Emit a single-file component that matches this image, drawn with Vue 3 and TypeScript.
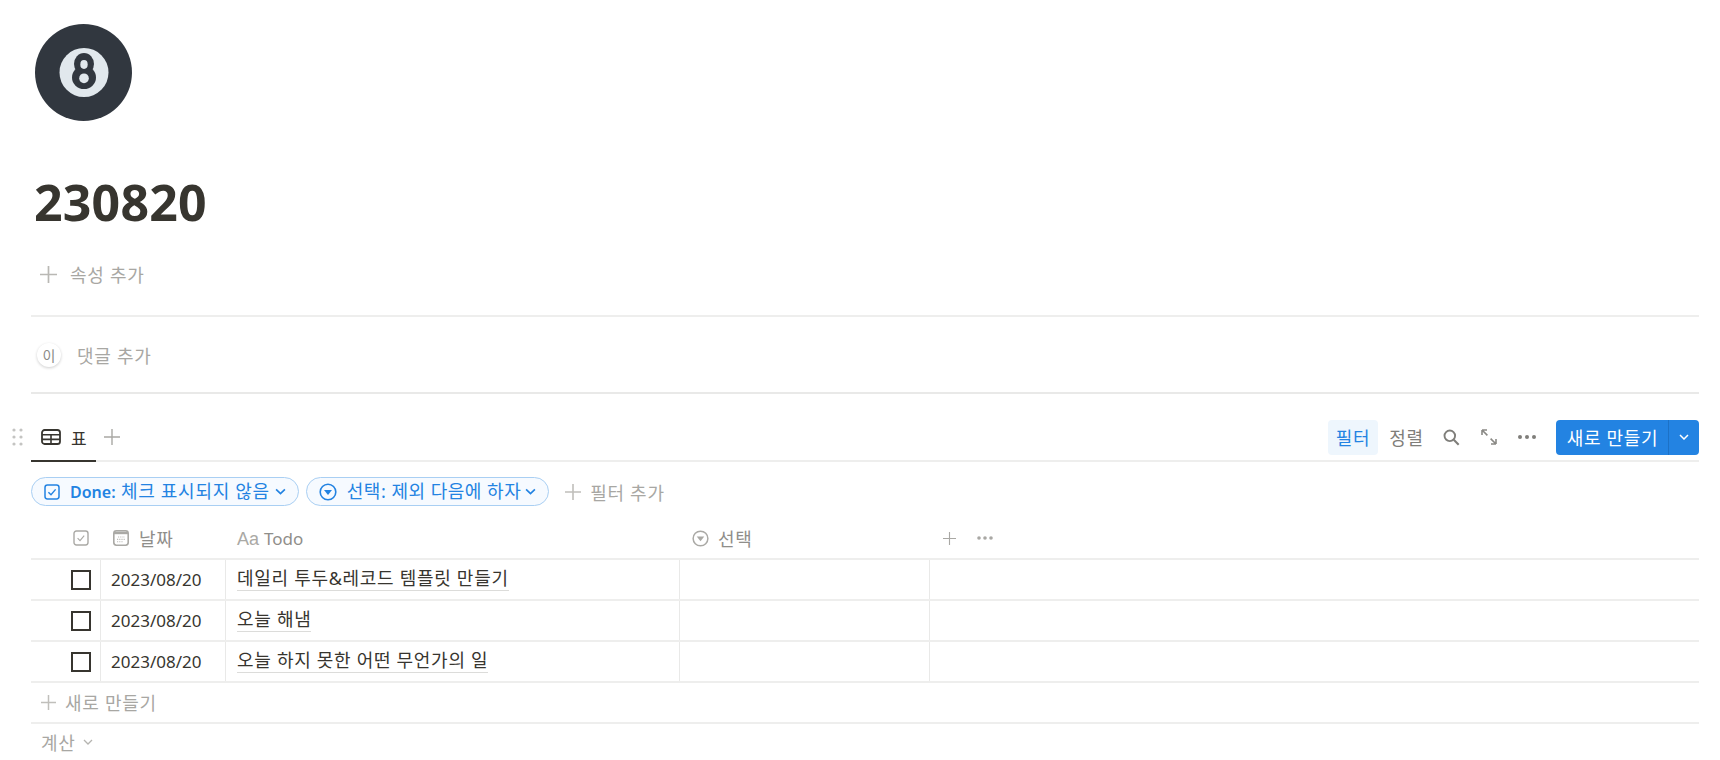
<script setup lang="ts">
interface TodoRow {
  date: string
  title: string
}

const rows: TodoRow[] = [
  { date: '2023/08/20', title: '데일리 투두&레코드 템플릿 만들기' },
  { date: '2023/08/20', title: '오늘 해냄' },
  { date: '2023/08/20', title: '오늘 하지 못한 어떤 무언가의 일' },
]
</script>

<template>
  <div class="page">
    <svg class="ball" viewBox="0 0 97 97" width="97" height="97">
      <circle cx="48.5" cy="48.5" r="48.5" fill="#31373f" />
      <circle cx="49" cy="48.5" r="24.5" fill="#e1e8ed" />
      <ellipse cx="49" cy="40" rx="10" ry="11" fill="#31373f" />
      <ellipse cx="49" cy="53.5" rx="12" ry="11.5" fill="#31373f" />
      <ellipse cx="49" cy="40.5" rx="3.7" ry="4.4" fill="#e1e8ed" />
      <ellipse cx="49" cy="54.3" rx="4.8" ry="4.9" fill="#e1e8ed" />
    </svg>
    <h1 class="title">230820</h1>

    <div class="add-prop">
      <svg class="plus" viewBox="0 0 16 16" width="17" height="17"><path d="M8 0v16M0 8h16" stroke="#b9b8b4" stroke-width="1.6" /></svg>
      <span>속성 추가</span>
    </div>

    <div class="comment">
      <span class="avatar">이</span>
      <span>댓글 추가</span>
    </div>

    <div class="tabs">
      <svg class="grip" viewBox="0 0 12 18" width="12" height="18">
        <g fill="#c4c4c2">
          <circle cx="2" cy="2" r="1.6" /><circle cx="9" cy="2" r="1.6" />
          <circle cx="2" cy="9" r="1.6" /><circle cx="9" cy="9" r="1.6" />
          <circle cx="2" cy="16" r="1.6" /><circle cx="9" cy="16" r="1.6" />
        </g>
      </svg>
      <div class="tab">
        <svg viewBox="0 0 20 16" width="20" height="16">
          <rect x="1" y="1" width="18" height="14" rx="2.6" fill="none" stroke="#37352f" stroke-width="1.8" />
          <path d="M1 5.8h18M1 10.4h18M10 5.8v9" stroke="#37352f" stroke-width="1.6" />
        </svg>
        <span>표</span>
      </div>
      <svg class="tab-plus" viewBox="0 0 16 16" width="16" height="16"><path d="M8 0v16M0 8h16" stroke="#a9a8a4" stroke-width="1.4" /></svg>

      <div class="actions">
        <span class="action active">필터</span>
        <span class="action sort">정렬</span>
        <svg class="action-icon" viewBox="0 0 18 18" width="17" height="17">
          <circle cx="7.2" cy="7.2" r="5.6" fill="none" stroke="#7f7e7a" stroke-width="2" />
          <path d="M11.4 11.4 16.6 16.6" stroke="#7f7e7a" stroke-width="2.2" />
        </svg>
        <svg class="action-icon" viewBox="0 0 16 16" width="16" height="16">
          <path d="M1 1h5M1 1v5M1.3 1.3 6.4 6.4M15 15h-5M15 15v-5M14.7 14.7 9.6 9.6" fill="none" stroke="#8a8985" stroke-width="1.6" />
        </svg>
        <svg class="action-icon" viewBox="0 0 18 4" width="18" height="4">
          <circle cx="2" cy="2" r="2" fill="#7f7e7a" /><circle cx="9" cy="2" r="2" fill="#7f7e7a" /><circle cx="16" cy="2" r="2" fill="#7f7e7a" />
        </svg>
        <div class="new-btn">
          <span class="new-label">새로 만들기</span>
          <span class="new-drop">
            <svg viewBox="0 0 10 6" width="10" height="6"><path d="M1 1l4 4 4-4" fill="none" stroke="#fff" stroke-width="1.5" /></svg>
          </span>
        </div>
      </div>
    </div>

    <div class="filters">
      <div class="pill">
        <svg viewBox="0 0 16 16" width="16" height="16">
          <rect x="1" y="1" width="14" height="14" rx="2.4" fill="none" stroke="#2383e2" stroke-width="1.5" />
          <path d="M4.4 8.2 7 10.8l4.6-5.4" fill="none" stroke="#2383e2" stroke-width="1.4" />
        </svg>
        <span class="pill-text"><b>Done:</b> 체크 표시되지 않음</span>
        <svg viewBox="0 0 10 6" width="11" height="7"><path d="M1 1l4 4 4-4" fill="none" stroke="#2383e2" stroke-width="1.5" /></svg>
      </div>
      <div class="pill">
        <svg viewBox="0 0 18 18" width="18" height="18">
          <circle cx="9" cy="9" r="7.8" fill="none" stroke="#2383e2" stroke-width="1.6" />
          <path d="M5 7h8l-4 5z" fill="#2383e2" />
        </svg>
        <span class="pill-text tight">선택: 제외 다음에 하자</span>
        <svg viewBox="0 0 10 6" width="11" height="7"><path d="M1 1l4 4 4-4" fill="none" stroke="#2383e2" stroke-width="1.5" /></svg>
      </div>
      <div class="add-filter">
        <svg viewBox="0 0 16 16" width="16" height="16"><path d="M8 0v16M0 8h16" stroke="#c0bfbb" stroke-width="1.6" /></svg>
        <span>필터 추가</span>
      </div>
    </div>

    <div class="table">
      <div class="row head">
        <div class="cell check">
          <svg viewBox="0 0 16 16" width="16" height="16">
            <rect x="1" y="1" width="14" height="14" rx="2.4" fill="none" stroke="#aaa9a5" stroke-width="1.4" />
            <path d="M4.6 8.2 7 10.6l4.2-5" fill="none" stroke="#aaa9a5" stroke-width="1.1" />
          </svg>
        </div>
        <div class="cell date">
          <svg viewBox="0 0 16 16" width="16" height="16">
            <rect x="0.8" y="0.8" width="14.4" height="14.4" rx="2.6" fill="#fff" stroke="#aaa9a5" stroke-width="1.6" />
            <path d="M1 1.6h14v2.6H1z" fill="#aaa9a5" />
            <path d="M5 7h7M4 9.4h8M4 11.8h6" stroke="#bdbcb8" stroke-width="1.1" stroke-dasharray="1.2 1" />
          </svg>
          <span>날짜</span>
        </div>
        <div class="cell todo"><span class="aa">Aa</span><span class="latin">Todo</span></div>
        <div class="cell select">
          <svg viewBox="0 0 18 18" width="17" height="17">
            <circle cx="9" cy="9" r="7.8" fill="none" stroke="#aaa9a5" stroke-width="1.6" />
            <path d="M5 7h8l-4 5z" fill="#aaa9a5" />
          </svg>
          <span>선택</span>
        </div>
        <div class="cell tools">
          <svg viewBox="0 0 14 14" width="13" height="13"><path d="M7 0v14M0 7h14" stroke="#a9a8a4" stroke-width="1.2" /></svg>
          <svg viewBox="0 0 16 4" width="16" height="4">
            <circle cx="2" cy="2" r="1.8" fill="#a9a8a4" /><circle cx="8" cy="2" r="1.8" fill="#a9a8a4" /><circle cx="14" cy="2" r="1.8" fill="#a9a8a4" />
          </svg>
        </div>
      </div>

      <div v-for="(row, i) in rows" :key="i" class="row body">
        <div class="cell check"><span class="box"></span></div>
        <div class="cell date">{{ row.date }}</div>
        <div class="cell todo"><span class="link">{{ row.title }}</span></div>
        <div class="cell select"></div>
        <div class="cell tools"></div>
      </div>

      <div class="add-row">
        <svg viewBox="0 0 16 16" width="15" height="15"><path d="M8 0v16M0 8h16" stroke="#c0bfbb" stroke-width="1.6" /></svg>
        <span>새로 만들기</span>
      </div>
      <div class="calc">
        <span>계산</span>
        <svg viewBox="0 0 10 6" width="10" height="6"><path d="M1 1l4 4 4-4" fill="none" stroke="#b5b4b0" stroke-width="1.3" /></svg>
      </div>
    </div>
  </div>
</template>

<style scoped>
/* Korean runs sit at 18px with a little tracking; latin runs override this. */
.page {
  box-sizing: border-box;
  width: 1720px;
  height: 760px;
  overflow: hidden;
  padding: 24px 21px 0 31px;
  color: #37352f;
  font-family: "Noto Sans", "Noto Sans CJK KR", sans-serif;
  font-size: 18px;
  letter-spacing: 0.7px;
}

.ball {
  display: block;
  margin-left: 4px;
}

.title {
  margin: 48px 0 0 3px;
  font-size: 50px;
  line-height: 66px;
  font-weight: 700;
  letter-spacing: 0.2px;
  color: #37352f;
}

.add-prop {
  display: flex;
  align-items: center;
  gap: 13px;
  height: 30px;
  margin-top: 24px;
  padding-left: 9px;
  color: #a8a7a3;
}

.comment {
  display: flex;
  align-items: center;
  gap: 16px;
  height: 75px;
  margin-top: 26px;
  padding-left: 6px;
  border-top: 2px solid #eeeeed;
  border-bottom: 2px solid #e9e9e8;
  color: #a8a7a3;
}

.avatar {
  display: flex;
  align-items: center;
  justify-content: center;
  width: 24px;
  height: 24px;
  border-radius: 50%;
  background: #fff;
  box-shadow: 0 1px 3px rgba(15, 15, 15, 0.2);
  font-size: 14px;
  letter-spacing: 0;
  color: #8b8a86;
}

.tabs {
  position: relative;
  display: flex;
  align-items: center;
  height: 66px;
  border-bottom: 2px solid #eeeeed;
}

.grip {
  position: absolute;
  left: -19px;
  top: 34px;
}

.tab {
  display: flex;
  align-items: center;
  gap: 10px;
  box-sizing: border-box;
  width: 65px;
  height: 67px;
  margin-bottom: -2px;
  padding: 20px 0 0 10px;
  border-bottom: 2px solid #37352f;
  font-size: 17px;
}

.tab-plus {
  margin: 20px 0 0 8px;
}

.actions {
  display: flex;
  align-items: center;
  margin-left: auto;
  padding-top: 20px;
}

.action {
  display: flex;
  align-items: center;
  justify-content: center;
  width: 50px;
  height: 35px;
  border-radius: 4px;
  color: #7f7e7a;
}

.action.sort {
  width: 54px;
  padding-left: 3px;
  box-sizing: border-box;
}

.action.active {
  background: #eef6fd;
  color: #2383e2;
}

.action-icon:nth-of-type(1) {
  margin-left: 11px;
}

.action-icon:nth-of-type(2) {
  margin-left: 21px;
}

.action-icon:nth-of-type(3) {
  margin-left: 21px;
}

.new-btn {
  display: flex;
  align-items: stretch;
  height: 35px;
  margin-left: 20px;
  border-radius: 4px;
  background: #2383e2;
  color: #fff;
}

.new-label {
  display: flex;
  align-items: center;
  justify-content: center;
  width: 113px;
  padding-left: 1px;
  box-sizing: border-box;
  border-right: 1px solid #1c71c6;
}

.new-drop {
  display: flex;
  align-items: center;
  justify-content: center;
  width: 30px;
}

.filters {
  display: flex;
  align-items: center;
  gap: 7px;
  margin-top: 15px;
}

.pill {
  display: flex;
  align-items: center;
  gap: 10px;
  height: 27px;
  padding: 0 12px;
  border: 1px solid #a9cff3;
  border-radius: 15px;
  background: #f6faff;
  color: #2383e2;
}

.pill b {
  font-size: 16px;
  font-weight: 600;
  letter-spacing: 0;
}

.pill-text {
  margin-right: -5px;
  line-height: 27px;
  white-space: nowrap;
}

.pill-text.tight {
  margin-right: -6px;
  letter-spacing: 0.5px;
}

.add-filter {
  display: flex;
  align-items: center;
  gap: 9px;
  margin-left: 9px;
  color: #a8a7a3;
}

.table {
  margin-top: 12px;
}

.row {
  display: grid;
  grid-template-columns: 70px 125px 454px 250px 1fr;
  border-bottom: 2px solid #eeeeed;
}

.head {
  height: 40px;
  color: #8f8e8a;
}

.body {
  height: 39px;
}

.cell {
  display: flex;
  align-items: center;
  min-width: 0;
}

.body .cell {
  border-right: 1px solid #e9e9e8;
}

.body .tools {
  border-right: 0;
}

.body .date,
.body .todo {
  padding-bottom: 1px;
  box-sizing: border-box;
}

.check {
  justify-content: flex-end;
  box-sizing: border-box;
}

.head .check {
  padding-right: 12px;
}

.body .check {
  padding-right: 9px;
}

.date {
  gap: 10px;
  padding-left: 10px;
}

.head .date {
  padding-left: 12px;
}

.todo {
  gap: 5px;
  padding-left: 11px;
}

.aa {
  color: #aaa9a5;
  font-family: "Liberation Sans", sans-serif;
  font-size: 18px;
  letter-spacing: 0;
  line-height: 24px;
  padding-top: 2px;
}

.latin {
  font-size: 17px;
  letter-spacing: 0;
}

.head .select {
  gap: 9px;
  padding-left: 12px;
}

.head .tools {
  gap: 21px;
  padding-left: 13px;
}

.box {
  box-sizing: border-box;
  width: 20px;
  height: 20px;
  border: 2px solid #37352f;
}

.body .date {
  font-size: 17px;
  letter-spacing: 0;
}

.link {
  border-bottom: 1px solid #dcdcda;
  line-height: 23px;
}

.add-row {
  display: flex;
  align-items: center;
  gap: 9px;
  height: 38px;
  padding: 0 0 1px 10px;
  border-bottom: 2px solid #eeeeed;
  color: #a8a7a3;
}

.calc {
  display: flex;
  align-items: center;
  gap: 7px;
  height: 36px;
  padding-left: 10px;
  color: #a8a7a3;
}
</style>
